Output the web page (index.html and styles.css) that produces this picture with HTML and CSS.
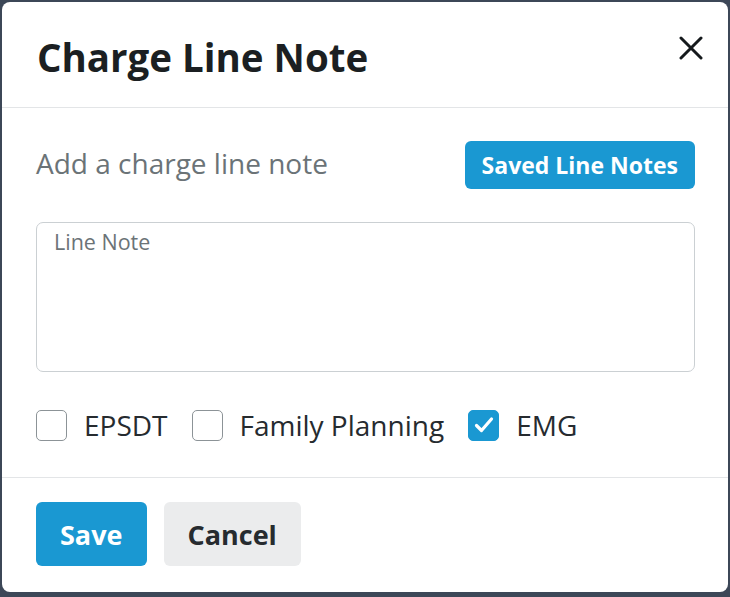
FILE: index.html
```html
<!DOCTYPE html>
<html>
<head>
<meta charset="utf-8">
<link rel="stylesheet" href="styles.css">
</head>
<body>
<div class="modal">
  <div class="header">
    <h1 class="title">Charge Line Note</h1>
    <button class="close" aria-label="Close">
      <svg width="24" height="24" viewBox="0 0 24 24"><path d="M2 2 L22 22 M22 2 L2 22" stroke="#15191c" stroke-width="3" stroke-linecap="round" fill="none"/></svg>
    </button>
  </div>
  <div class="body">
    <div class="row-top">
      <span class="prompt">Add a charge line note</span>
      <button class="btn btn-primary btn-small">Saved Line Notes</button>
    </div>
    <div class="textarea">
      <span class="placeholder">Line Note</span>
    </div>
    <div class="checks">
      <label class="check"><span class="box"></span><span class="lbl">EPSDT</span></label>
      <label class="check"><span class="box"></span><span class="lbl">Family Planning</span></label>
      <label class="check"><span class="box checked"><svg width="24" height="24" viewBox="0 0 24 24"><path d="M4.5 12.5 L9.5 17.5 L19.5 6" stroke="#fff" stroke-width="3.2" fill="none" stroke-linecap="round" stroke-linejoin="round"/></svg></span><span class="lbl">EMG</span></label>
    </div>
  </div>
  <div class="footer">
    <button class="btn btn-primary btn-large">Save</button>
    <button class="btn btn-secondary btn-large">Cancel</button>
  </div>
</div>
</body>
</html>
```

FILE: styles.css
```css
* { box-sizing: border-box; }
html, body { margin: 0; padding: 0; }
body {
  background: #3c4757;
  width: 730px;
  height: 597px;
  padding: 2px 2px 5px 2px;
  font-family: "Open Sans", "Liberation Sans", sans-serif;
  overflow: hidden;
}
.modal {
  background: #fff;
  border-radius: 8px;
  height: 590px;
  display: flex;
  flex-direction: column;
}
.header {
  height: 106px;
  border-bottom: 1px solid #e3e5e7;
  display: flex;
  align-items: center;
  justify-content: space-between;
  padding: 4px 25px 0 35px;
}
.title {
  margin: 0;
  font-size: 38.5px;
  font-weight: 700;
  color: #1b1f22;
}
.close {
  border: none;
  background: none;
  padding: 0;
  width: 24px;
  height: 24px;
  margin-top: -18px;
  cursor: pointer;
}
.body {
  padding: 33px 33px 0 34px;
  height: 370px;
  border-bottom: 1px solid #e3e5e7;
}
.row-top {
  display: flex;
  align-items: center;
  justify-content: space-between;
  height: 48px;
}
.prompt {
  font-size: 28px;
  color: #6b7377;
  margin-top: -4px;
}
.btn {
  font-family: "Open Sans", "Liberation Sans", sans-serif;
  font-weight: 700;
  border: none;
  border-radius: 6px;
  cursor: pointer;
}
.btn-primary { background: #1a98d2; color: #fff; }
.btn-secondary { background: #ebeced; color: #262b2f; }
.btn-small {
  height: 48px;
  padding: 0 17px;
  font-size: 23px;
}
.btn-large {
  height: 64px;
  padding: 0 24px;
  font-size: 27px;
}
.textarea {
  margin-top: 33px;
  height: 150px;
  border: 1.5px solid #cbd0d3;
  border-radius: 7px;
  padding: 4px 17px;
}
.placeholder {
  font-size: 21.5px;
  color: #6b7377;
}
.checks {
  display: flex;
  align-items: center;
  margin-top: 34px;
  gap: 24px;
}
.check {
  display: flex;
  align-items: center;
  gap: 17px;
}
.box {
  width: 31px;
  height: 31px;
  border: 1.5px solid #8c9397;
  border-radius: 5px;
  display: flex;
  align-items: center;
  justify-content: center;
}
.box.checked {
  background: #1a98d2;
  border-color: #1a98d2;
}
.lbl {
  font-size: 28px;
  color: #262b2f;
}
.footer {
  display: flex;
  gap: 17px;
  padding: 24px 34px 0 34px;
}
```
